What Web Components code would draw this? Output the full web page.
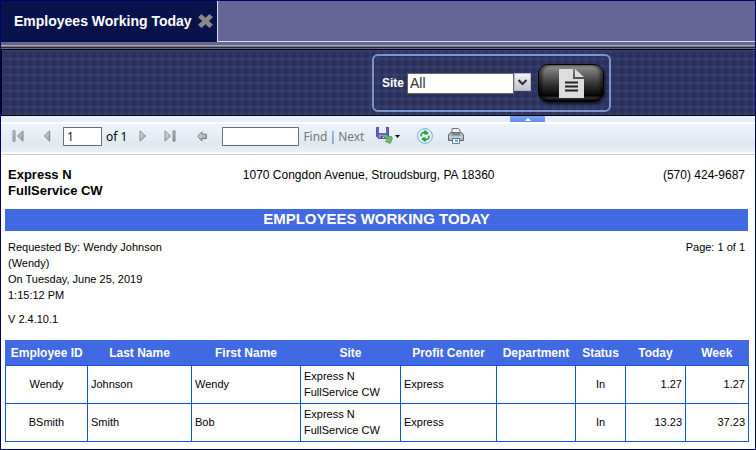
<!DOCTYPE html>
<html lang="en">
<head>
<meta charset="utf-8">
<title>Employees Working Today</title>
<style>
  body { margin: 0; font-family: "Liberation Sans", Arial, sans-serif; color: #000; background: #fff; }
</style>
</head>
<body>
<report-app>
  <tab-strip slot="tabs"><app-tab>Employees Working Today</app-tab></tab-strip>
  <filter-panel slot="filters"></filter-panel>
  <panel-splitter slot="filters"></panel-splitter>
  <report-toolbar slot="toolbar"></report-toolbar>
  <report-page>
    <report-header>
      <span slot="company">Express N<br>FullService CW</span>
      <span slot="address">1070 Congdon Avenue, Stroudsburg, PA 18360</span>
      <span slot="phone">(570) 424-9687</span>
    </report-header>
    <report-title>EMPLOYEES WORKING TODAY</report-title>
    <report-meta>
      <span slot="requested">Requested By: Wendy Johnson<br>(Wendy)<br>On Tuesday, June 25, 2019<br>1:15:12 PM</span>
      <span slot="version">V 2.4.10.1</span>
      <span slot="page">Page: 1 of 1</span>
    </report-meta>
    <employee-table></employee-table>
  </report-page>
</report-app>

<script>
function define(name, markup, setup) {
  const template = document.createElement('template');
  template.innerHTML = markup;
  customElements.define(name, class extends HTMLElement {
    constructor() {
      super();
      this.attachShadow({ mode: 'open' }).append(template.content.cloneNode(true));
      if (setup) setup(this.shadowRoot);
    }
  });
}

define('report-app', `
  <style>
    :host { display: flex; flex-direction: column; box-sizing: border-box; min-height: 100vh; border: 1px solid #000066; background: #fff; }
    main { flex: 1; }
  </style>
  <slot name="tabs"></slot>
  <slot name="filters"></slot>
  <slot name="toolbar"></slot>
  <main><slot></slot></main>
`);

define('tab-strip', `
  <style>
    :host { display: block; background: #666696; }
    nav { display: flex; height: 41px; }
    nav::after { content: ""; flex: 1; border-left: 1px solid #dcdcec; border-bottom: 1px solid #dcdcec; }
    .rail { height: 7px; background: linear-gradient(#666696 3px, #a9a9a9 3px 4px, #7c7870 4px 5px, #2c2848 5px 6px, #666696 6px); }
  </style>
  <nav><slot></slot></nav>
  <div class="rail"></div>
`);

define('app-tab', `
  <style>
    :host { display: flex; align-items: center; gap: 6px; padding: 0 4px 2px 13px; background: #08134b; color: #fff; font-size: 14px; font-weight: bold; white-space: nowrap; }
    button { display: flex; border: 0; padding: 0; background: none; }
  </style>
  <span><slot></slot></span>
  <button aria-label="Close tab">
    <svg width="15" height="14" viewBox="0 0 15 14"><path d="M3.5 0 7.5 3.8 11.5 0 15 3.2 10.8 7 15 10.8 11.5 14 7.5 10.2 3.5 14 0 10.8 4.2 7 0 3.2Z" fill="#888888"/></svg>
  </button>
`);

define('filter-panel', `
  <style>
    :host { display: block; border: solid #000; border-width: 1px 0 1px 1px; background: radial-gradient(circle at 4px 5px, #2b325c 3px, transparent 4px) 0 0 / 8px 8px #353e6c; }
    .group { display: flex; align-items: center; box-sizing: border-box; width: max-content; height: 58px; margin: 4px 0 3px 370px; padding: 0 5px 0 8px; border: 2px solid #7b94cc; border-radius: 6px; }
    label { margin-right: 3px; color: #fff; font-size: 12px; font-weight: bold; }
    select { appearance: none; box-sizing: border-box; width: 107px; height: 21px; margin: 0; padding: 0 2px; border: 1px solid #666; border-radius: 0; background: #fff; color: #333; font: 14px "Liberation Sans", Arial, sans-serif; }
    .arrow { display: block; margin: 0 7px 2px 0; }
    button { display: flex; align-items: center; justify-content: center; width: 66px; height: 38px; padding: 0; border: 1px solid #000; border-radius: 10px; background: linear-gradient(#989898, #666 25%, #303030 55%, #050505 85%, #333 92%, #000); box-shadow: inset 3px 0 3px #0008, inset -3px 0 3px #0008, 1px 2px 3px #0009; }
  </style>
  <div class="group">
    <label for="site">Site</label>
    <select id="site"><option>All</option></select>
    <svg class="arrow" width="17" height="18" viewBox="0 0 17 18" aria-hidden="true">
      <defs><linearGradient id="a" x2="0" y2="1"><stop stop-color="#f4f4f8"/><stop offset="1" stop-color="#bfc0d2"/></linearGradient></defs>
      <rect x=".5" y=".5" width="16" height="17" fill="url(#a)" stroke="#b4b4c4"/>
      <path d="M4.5 7 8.5 11 12.5 7" fill="none" stroke="#333" stroke-width="2.2"/>
    </svg>
    <button aria-label="View report">
      <svg width="25" height="29" viewBox="0 0 25 29">
        <path d="M0 0H14V10H25V29H0Z" fill="#ddd"/><path d="M16 0 25 8H16Z" fill="#ddd"/>
        <path d="M6 13.5H19M6 17.5H19M6 21.5H19" stroke="#222" stroke-width="2"/>
      </svg>
    </button>
  </div>
`);

define('panel-splitter', `
  <style>
    :host { display: block; height: 6px; background: #e6eff7; }
    button { display: flex; align-items: center; justify-content: center; width: 35px; height: 6px; margin-left: 509px; padding: 0; border: 0; background: linear-gradient(#7fa6f4, #5f8cec); }
  </style>
  <button aria-label="Collapse filters"><svg width="6" height="3" viewBox="0 0 6 3"><path d="M0 3 3 0 6 3Z" fill="#fff"/></svg></button>
`);

define('report-toolbar', `
  <style>
    :host { display: block; padding: 2px 0; border-bottom: 1px solid #ccc; font-family: "Noto Sans", sans-serif; font-size: 12px; }
    [role=toolbar] { display: flex; align-items: center; box-sizing: border-box; height: 28px; padding: 0 0 4px 11px; background: linear-gradient(#edf3fa, #e4ecf4 55%, #dfe7ef 65%, #e9f1f7); }
    button { display: flex; padding: 0; border: 0; background: none; font: inherit; color: #777; }
    input { box-sizing: border-box; height: 19px; padding: 0 3px; border: 1px solid #707070; background: #fff; font: inherit; color: #222; }
    .number { width: 39px; margin: 0 4px 0 12px; }
    .search { width: 77px; margin: 0 4px 0 15px; }
    .prev { margin-left: 19px; }
    .next { margin-left: 12px; }
    .last { margin-left: 17px; }
    .back { margin-left: 21px; }
    .bar { margin: 0 2px; color: #2a7ac0; }
    .save { align-items: center; gap: 2px; margin-left: 12px; }
    .refresh { margin-left: 17px; }
    .print { margin-left: 15px; }
    svg { display: block; }
  </style>
  <svg width="0" height="0" style="position:absolute" aria-hidden="true"><defs>
    <linearGradient id="g" x2="1" y2="1"><stop stop-color="#e8e8e8"/><stop offset="1" stop-color="#909498"/></linearGradient></defs></svg>
  <div role="toolbar" aria-label="Report">
    <button aria-label="First page"><svg width="12" height="12" viewBox="0 0 12 12"><g fill="url(#g)" stroke="#868a90"><path d="M1 .8H3V11.2H1ZM11 .8V11.2L5.5 6Z"/></g></svg></button>
    <button class="prev" aria-label="Previous page"><svg width="8" height="12" viewBox="0 0 8 12"><path d="M6.7 .8V11.2L1.2 6Z" fill="url(#g)" stroke="#868a90"/></svg></button>
    <input class="number" aria-label="Page number" value="1"><span>of 1</span>
    <button class="next" aria-label="Next page"><svg width="8" height="12" viewBox="0 0 8 12"><path d="M1 .8V11.2L6.5 6Z" fill="url(#g)" stroke="#868a90"/></svg></button>
    <button class="last" aria-label="Last page"><svg width="12" height="12" viewBox="0 0 12 12"><path d="M1 .8V11.2L6.5 6ZM9 .8H11V11.2H9Z" fill="url(#g)" stroke="#868a90"/></svg></button>
    <button class="back" aria-label="Back to parent report"><svg width="10" height="11" viewBox="0 0 10 11"><path d="M5 .8V3.2H9.4V7.6H5V10L.7 5.4Z" fill="url(#g)" stroke="#777b80"/></svg></button>
    <input class="search" aria-label="Find text">
    <button>Find</button><span class="bar">|</span><button>Next</button>
    <button class="save" aria-label="Export">
      <svg width="17" height="18" viewBox="0 0 17 18">
        <path d="M.5 .5H12.5V11.5H2.5L.5 9.5Z" fill="#625dc8" stroke="#5551a8"/>
        <path d="M3 0H10V6H3Z" fill="#eef0fb"/><path d="M3.5 8H8.5V11H3.5Z" fill="#d8dcf2"/><path d="M4.5 8.5H6.5V11H4.5Z" fill="#393688"/>
        <path d="M7.2 7.2C9.8 7 11.6 8.2 12.6 10L15.6 9.4 16.3 12 14.2 16.3 9.5 14.4 11 12.6C10.4 10.8 9.2 10 7.2 9.6Z" fill="#6dbd76" stroke="#3f9350" stroke-width=".8"/>
      </svg>
      <svg width="5" height="3" viewBox="0 0 5 3"><path d="M0 0H5L2.5 3Z" fill="#000"/></svg>
    </button>
    <button class="refresh" aria-label="Refresh"><svg width="16" height="16" viewBox="0 0 16 16">
      <circle cx="8" cy="8" r="7.4" fill="#e9f4fd" stroke="#79a9d9"/>
      <g fill="none" stroke="#23a33c" stroke-width="1.6"><path d="M4 8.4C3.6 5.4 5.6 4 8 4.4M12 7.6C12.4 10.6 10.4 12 8 11.6"/></g>
      <path d="M7.6 1.8 11.4 4.6 10.6 6.6 7 6.6ZM8.4 14.2 4.6 11.4 5.4 9.4 9 9.4Z" fill="#23a33c"/></svg></button>
    <button class="print" aria-label="Print"><svg width="16" height="16" viewBox="0 0 16 16">
      <path d="M4 .5H10.5L12 2V6H4Z" fill="#f2f5f8" stroke="#70757c"/>
      <path d="M1.5 5.5 3 4.5H13L14.5 5.5 15.5 7V12.5H.5V7Z" fill="#b3b6bd" stroke="#64686e"/>
      <path d="M4 4.5H12V7.5H4Z" fill="#7f848c"/><path d="M1 9H15" stroke="#dcdfe3"/>
      <path d="M4.5 10.5H11.5V15.5H4.5Z" fill="#fff" stroke="#5d7f9f"/><path d="M7 11.5H10V14H7Z" fill="#66b5ee"/></svg></button>
  </div>
`);

define('report-page', `
  <style>:host { display: block; padding: 12px 7px 7px 4px; line-height: 16px; }</style>
  <slot></slot>
`);

define('report-header', `
  <style>
    :host { display: grid; grid-template-columns: 15fr auto 16fr; padding: 0 3px 10px; font-size: 12px; }
    .company { font-size: 13px; font-weight: bold; }
    .phone { text-align: right; }
  </style>
  <div class="company"><slot name="company"></slot></div>
  <div><slot name="address"></slot></div>
  <div class="phone"><slot name="phone"></slot></div>
`);

define('report-title', `
  <style>
    :host { display: block; background: #4169e1; color: #fff; text-align: center; }
    h1 { margin: 0; font-size: 15px; line-height: 20px; padding-bottom: 2px; }
  </style>
  <h1><slot></slot></h1>
`);

define('report-meta', `
  <style>
    :host { display: flex; justify-content: space-between; padding: 8px 3px 13px; font-size: 11px; }
    .version { margin-top: 8px; }
  </style>
  <div><slot name="requested"></slot><div class="version"><slot name="version"></slot></div></div>
  <div><slot name="page"></slot></div>
`);

define('employee-table', `
  <style>
    :host { display: block; font-size: 11px; }
    table { table-layout: fixed; width: 100%; border-collapse: collapse; }
    th { height: 24px; padding: 0; background: #4169e1; color: #fff; font-size: 12px; text-align: center; white-space: nowrap; }
    thead { border: 1px solid #4169e1; }
    td { box-sizing: border-box; height: 38px; padding: 0 3px 2px; border: 1px solid #0a58e0; }
    .center { text-align: center; }
    .number { text-align: right; }
  </style>
  <table>
    <colgroup></colgroup>
    <thead><tr></tr></thead>
    <tbody></tbody>
  </table>
`, root => {
  const columns = [
    ['Employee ID', 82, 'center'], ['Last Name', 104, ''], ['First Name', 109, ''],
    ['Site', 100, ''], ['Profit Center', 96, ''], ['Department', 79, ''],
    ['Status', 50, 'center'], ['Today', 60, 'number'], ['Week', 63, 'number']
  ];
  const rows = [
    ['Wendy', 'Johnson', 'Wendy', 'Express N<br>FullService CW', 'Express', '', 'In', '1.27', '1.27'],
    ['BSmith', 'Smith', 'Bob', 'Express N<br>FullService CW', 'Express', '', 'In', '13.23', '37.23']
  ];
  root.querySelector('colgroup').innerHTML = columns.map(c => `<col style="width:${c[1]}px">`).join('');
  root.querySelector('thead tr').innerHTML = columns.map(c => `<th scope="col">${c[0]}</th>`).join('');
  root.querySelector('tbody').innerHTML = rows.map(r =>
    `<tr>${r.map((v, i) => `<td class="${columns[i][2]}">${v}</td>`).join('')}</tr>`).join('');
});
</script>
</body>
</html>
